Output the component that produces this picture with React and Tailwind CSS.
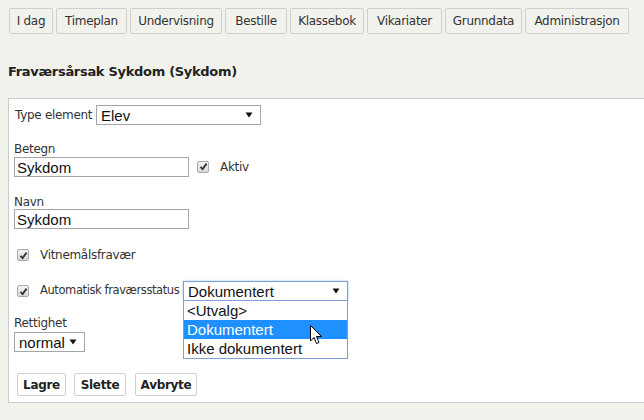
import React from 'react'

const NAV = [
  ['I dag', 44], ['Timeplan', 71], ['Undervisning', 92], ['Bestille', 62],
  ['Klassebok', 74], ['Vikariater', 75], ['Grunndata', 77], ['Administrasjon', 104],
]

const Arrow = () => (
  <svg width="8" height="6" viewBox="0 0 8 6" className="shrink-0">
    <path d="M0.5 0.5 H7.5 L4 5.5 Z" fill="#111" />
  </svg>
)

const Check = () => (
  <span className="inline-flex w-[12px] h-[12px] items-center justify-center rounded-[2px] border border-[#a9a9a9] bg-gradient-to-b from-[#f4f4f4] to-[#d8d8d8] shrink-0">
    <svg width="9" height="9" viewBox="0 0 9 9">
      <path d="M1.5 4.8 L3.6 7 L7.6 1.6" stroke="#333" strokeWidth="1.8" fill="none" />
    </svg>
  </span>
)

function Select({ value, w, focused }) {
  return (
    <div className={`flex items-center justify-between h-[20px] pl-[4px] pr-[7px] bg-white border ${focused ? 'border-[#7b9fd6] shadow-[0_0_2px_#9ec1f0]' : 'border-[#a6a6a6]'} font-['Liberation_Sans',Arial,sans-serif] text-[15px] text-[#111] leading-none tracking-normal ${w}`}>
      <span>{value}</span>
      <Arrow />
    </div>
  )
}

const Input = ({ value }) => (
  <div className="flex items-center w-[175px] h-[20px] pl-[2px] bg-white border border-[#a6a6a6] font-['Liberation_Sans',Arial,sans-serif] text-[15px] text-[#111] leading-none tracking-normal">
    {value}
  </div>
)

const Btn = ({ children, w }) => (
  <div className={`flex items-center justify-center h-[23px] border border-[#cfcfcf] rounded-[2px] bg-white text-[12px] font-bold text-[#222] ${w}`}>{children}</div>
)

export default function App() {
  return (
    <div className="h-[420px] w-[644px] overflow-hidden bg-[#f2f2ed] font-['DejaVu_Sans',sans-serif] text-[#333] tracking-[-0.3px]">
      <div className="flex gap-[3px] pl-[9px] pt-[8px]">
        {NAV.map(([t, w]) => (
          <div key={t} style={{ width: w }} className="flex items-center justify-center h-[26px] border border-[#cfcfcf] rounded-[2px] bg-[#f2f2ed] text-[12px] text-[#333]">{t}</div>
        ))}
      </div>

      <div className="mt-[30px] pl-[8px] h-[16px] leading-[16px] text-[13px] font-bold text-[#222]">Fraværsårsak Sykdom (Sykdom)</div>

      <div className="relative mt-[18px] ml-[8px] h-[305px] bg-white border-t border-l border-b border-[#cccccc] pl-[5px] pt-[6px] text-[12px]">
        <div className="flex items-center">
          <span className="pl-[1px] w-[82px] whitespace-nowrap">Type element</span>
          <Select value="Elev" w="w-[165px]" />
        </div>

        <div className="mt-[17px] h-[14px] leading-[14px]">Betegn</div>
        <div className="flex items-center mt-[1px]">
          <Input value="Sykdom" />
          <span className="ml-[8px]"><Check /></span>
          <span className="ml-[11px]">Aktiv</span>
        </div>

        <div className="mt-[18px] h-[14px] leading-[14px]">Navn</div>
        <div><Input value="Sykdom" /></div>

        <div className="flex items-center mt-[20px] h-[12px] pl-[3px]">
          <Check />
          <span className="ml-[11px]">Vitnemålsfravær</span>
        </div>

        <div className="flex items-center mt-[20px] pl-[3px]">
          <Check />
          <span className="ml-[11px] w-[143px] whitespace-nowrap text-[11.5px] tracking-[-0.4px]">Automatisk fraværsstatus</span>
          <Select value="Dokumentert" w="w-[165px]" focused />
        </div>

        <div className="mt-[15px] h-[14px] leading-[14px]">Rettighet</div>
        <div className="mt-[2px]"><Select value="normal" w="w-[71px]" /></div>

        <div className="flex mt-[21px] pl-[3px]">
          <Btn w="w-[49px]">Lagre</Btn>
          <span className="ml-[8px]"><Btn w="w-[52px]">Slette</Btn></span>
          <span className="ml-[9px]"><Btn w="w-[62px]">Avbryte</Btn></span>
        </div>

        <div className="absolute left-[174px] top-[202px] w-[165px] bg-white border border-[#7b9fd6] border-t-0 font-['Liberation_Sans',Arial,sans-serif] text-[15px] text-[#111] leading-[19px] tracking-normal">
          <div className="pl-[3px] h-[19px]">&lt;Utvalg&gt;</div>
          <div className="pl-[3px] h-[19px] bg-[#1e90ff] text-white">Dokumentert</div>
          <div className="pl-[3px] h-[19px]">Ikke dokumentert</div>
        </div>

        <svg className="absolute left-[301px] top-[226px]" width="13" height="21" viewBox="0 0 13 21">
          <path d="M0.5 0.5 V16 L4 12.5 L6.5 18.5 L9 17.5 L6.5 11.5 H11.5 Z" fill="#fff" stroke="#000" strokeWidth="1" strokeLinejoin="round" />
        </svg>
      </div>
    </div>
  )
}
